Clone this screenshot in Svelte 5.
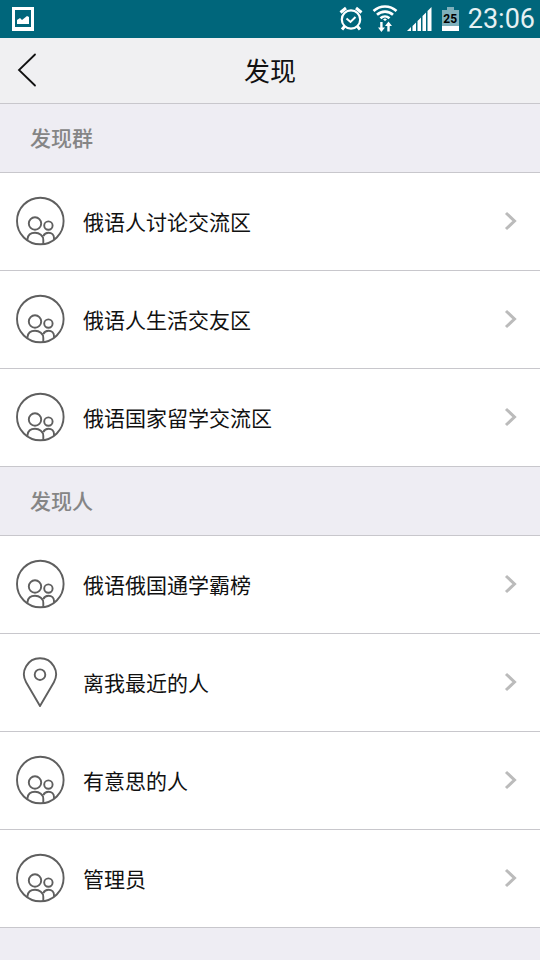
<script>
    const sections = [
        {
            title: '发现群',
            items: [
                { name: '俄语人讨论交流区', icon: 'group' },
                { name: '俄语人生活交友区', icon: 'group' },
                { name: '俄语国家留学交流区', icon: 'group' }
            ]
        },
        {
            title: '发现人',
            items: [
                { name: '俄语俄国通学霸榜', icon: 'group' },
                { name: '离我最近的人', icon: 'pin' },
                { name: '有意思的人', icon: 'group' },
                { name: '管理员', icon: 'group' }
            ]
        }
    ];
</script>

<!-- Status bar -->
<div class="status-bar">
    <svg class="status-picture" width="22" height="24" viewBox="0 0 22 24" aria-hidden="true">
        <path fill="#fff" fill-rule="evenodd" d="M0 0h22v24H0zM3 3v17h16V3z" />
        <path fill="#fff" d="M5 17v-4l3-2 2 2 5-4 2 1v7z" />
    </svg>
    <div class="status-icons">
        <svg width="24" height="26" viewBox="0 0 24 26" fill="none" stroke="#fff" aria-hidden="true">
            <circle cx="12" cy="13.500" r="9.200" stroke-width="2.200" />
            <path stroke-width="2" d="M7.500 12.500l4 3.500 5-5" />
            <path stroke-width="3" d="M1.500 6.500l5.500-4.500M22.500 6.500L17 2M5.500 20.500L3 23.500M18.500 20.500l2.500 3" />
        </svg>
        <svg width="26" height="28" viewBox="0 0 26 28" fill="none" stroke="#fff" aria-hidden="true">
            <path stroke-width="2.600" d="M1.500 6C8-.1 18-.1 24.500 6M5 9.800c4.500-4.300 11.500-4.300 16 0M8.500 13.300c2.600-2.400 6.400-2.400 9 0" />
            <path fill="#fff" stroke="none" d="M11 14.500l2-1.200 2 1.200-2 1.500zM8.200 17h2.400v5.500H13L9.400 27 6 22.500h2.200zM15.300 26.500h2.400v-5.500H20L16.500 16.500 13 21h2.300z" />
        </svg>
        <svg width="26" height="26" viewBox="0 0 26 26" fill="#fff" aria-hidden="true">
            <path d="M0 25l4-4v4zM5.500 20l3.500-3.500V25H5.500zM10.500 15l3.500-3.500V25h-3.500zM15.500 10L19 6.500V25h-3.500zM20.500 5L24.500 1v24h-4z" />
        </svg>
        <div class="battery">25</div>
        <span class="clock">23:06</span>
    </div>
</div>

<!-- Header -->
<header>
    <button class="back" aria-label="返回">
        <svg width="20" height="34" viewBox="0 0 20 34" fill="none" stroke="#111" stroke-width="1.800" stroke-linecap="round">
            <path d="M18 1.500L2 17l16 15.500" />
        </svg>
    </button>
    <h1>发现</h1>
</header>

<main>
    {#each sections as section}
        <h2>{section.title}</h2>
        <ul>
            {#each section.items as item}
                <li>
                    <a href="#{item.name}">
                        <svg class="icon" width="50" height="50" viewBox="0 0 50 50" fill="none" stroke="#5f5f5f" stroke-width="1.900" aria-hidden="true">
                            {#if item.icon === 'pin'}
                                <path d="M25 49L11.100 25.200a16 16 0 1 1 27.800 0z" />
                                <circle cx="25" cy="17.700" r="5.300" />
                            {:else}
                                <circle cx="25.300" cy="25" r="23.300" />
                                <circle cx="20" cy="27.500" r="6.200" />
                                <circle cx="33.400" cy="29.600" r="4.200" />
                                <path d="M12.500 44v-1c.5-4 3.700-6.200 7.500-6.200 4.500 0 8.300 3 8.300 7.200v4M28.300 40c1-2 2.800-3.200 5.200-3.200 3.300 0 5.500 2.200 5.500 5.200v1.500" />
                            {/if}
                        </svg>
                        <span class="name">{item.name}</span>
                        <svg class="arrow" width="14" height="20" viewBox="0 0 14 20" fill="none" stroke="#bbb" stroke-width="3" aria-hidden="true">
                            <path d="M2 2l8.500 8L2 18" />
                        </svg>
                    </a>
                </li>
            {/each}
        </ul>
    {/each}
</main>

<style>
    :global(body) {
        margin: 0;
        background: #eeedf3;
        font-family: "Noto Sans CJK SC", sans-serif;
        color: #111;
    }

    .status-bar {
        display: flex;
        align-items: center;
        justify-content: space-between;
        height: 38px;
        padding: 0 5px 0 12px;
        background: #00667b;
    }

    .status-icons {
        display: flex;
        align-items: center;
        gap: 9px;
    }

    .battery {
        position: relative;
        width: 17px;
        height: 21px;
        margin-top: 2px;
        background: linear-gradient(#7fb0bb 16px, #fff 16px);
        color: #000;
        font: bold 12px/18px Roboto, sans-serif;
        text-align: center;
    }

    .battery::before {
        content: "";
        position: absolute;
        top: -3px;
        left: 5px;
        width: 7px;
        height: 3px;
        background: #7fb0bb;
    }

    .clock {
        color: #e6f1f3;
        font: 27px/38px Roboto, sans-serif;
    }

    header {
        display: grid;
        grid-template-columns: 54px 1fr 54px;
        align-items: center;
        box-sizing: border-box;
        height: 66px;
        padding-bottom: 2px;
        background: #f0f0f2;
        border-bottom: 1px solid #c8c7cc;
    }

    .back {
        display: flex;
        padding: 0 17px;
        border: 0;
        background: none;
    }

    h1 {
        margin: 0;
        font-size: 26px;
        font-weight: 400;
        line-height: 40px;
        text-align: center;
    }

    h2 {
        margin: 0;
        padding: 0 30px 2px;
        border-bottom: 1px solid #c8c7cc;
        color: #858585;
        font-size: 21px;
        font-weight: 500;
        line-height: 66px;
    }

    ul {
        margin: 0;
        padding: 0;
        list-style: none;
        background: #fff;
    }

    li {
        border-bottom: 1px solid #c8c7cc;
    }

    a {
        display: flex;
        align-items: center;
        box-sizing: border-box;
        height: 97px;
        padding: 0 22px 2px 15px;
        color: inherit;
        text-decoration: none;
    }

    .icon {
        margin-right: 18px;
    }

    .name {
        flex: 1;
        font-size: 21px;
        line-height: 30px;
    }
</style>
